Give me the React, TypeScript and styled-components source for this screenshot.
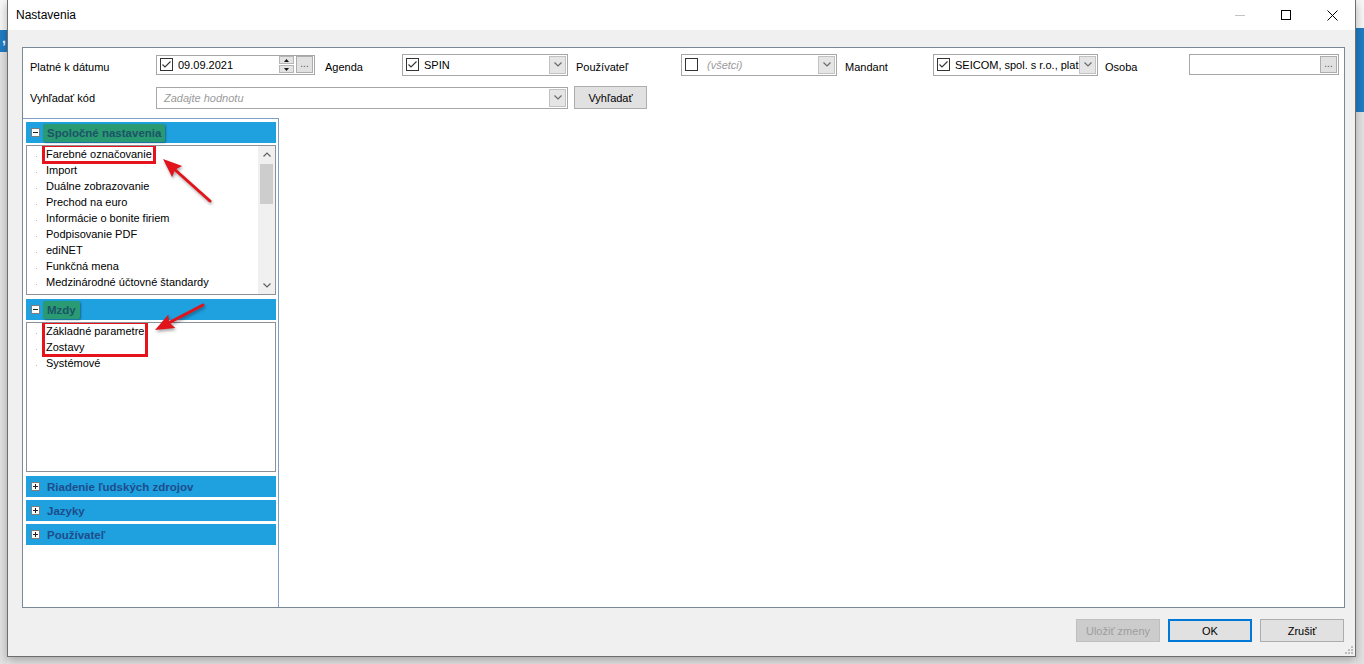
import styled, { createGlobalStyle } from "styled-components";

const GlobalStyle = createGlobalStyle`
  html, body {
    margin: 0;
    padding: 0;
  }
  body {
    font-family: "Liberation Sans", Arial, sans-serif;
    font-size: 11px;
    color: #000;
    background: #e8e8e8;
    overflow: hidden;
  }
`;

const Desktop = styled.div`
  display: flex;
  width: 1364px;
  height: 664px;
`;

const Strip = styled.div<{ $w: number; $from: number; $to: number }>`
  width: ${(p) => p.$w}px;
  flex-shrink: 0;
  overflow: hidden;
  background: linear-gradient(
    to bottom,
    #f6f6f6 0,
    #f6f6f6 ${(p) => p.$from}px,
    #1f7cc4 ${(p) => p.$from}px,
    #1f7cc4 ${(p) => p.$to}px,
    #e2e2e2 ${(p) => p.$to}px
  );
`;

const StripText = styled.div`
  padding: 30px 0 0 2px;
  color: #fff;
  font-size: 14px;
  font-weight: bold;
`;

const Window = styled.div`
  position: relative;
  width: 1349px;
  height: 657px;
  flex-shrink: 0;
  box-sizing: border-box;
  border: 1px solid #6e6e6e;
  border-top: 0;
  background: #f0f0f0;
  display: flex;
  flex-direction: column;
  box-shadow: 0 4px 9px rgba(0, 0, 0, 0.28);
`;

const TitleBar = styled.div`
  height: 30px;
  flex-shrink: 0;
  background: #fff;
  display: flex;
  align-items: center;
  padding-left: 8px;
`;

const Title = styled.span`
  margin-right: auto;
  font-size: 12px;
`;

const CaptionButton = styled.div`
  width: 46px;
  height: 30px;
  display: flex;
  align-items: center;
  justify-content: center;
`;

const Body = styled.div`
  flex: 1;
  padding: 17px 10px 0 14px;
  display: flex;
  flex-direction: column;
`;

const Panel = styled.div`
  height: 561px;
  box-sizing: border-box;
  border: 1px solid #7a8797;
  background: #fff;
  display: flex;
  flex-direction: column;
`;

const Form = styled.div`
  padding: 5px 0 0 7px;
  display: flex;
  flex-direction: column;
  gap: 10px;
`;

const Row = styled.div<{ $labelDrop?: number }>`
  display: flex;
  align-items: center;
  height: 23px;
`;

const Label = styled.span<{ $w: number; $ml?: number; $drop?: number }>`
  width: ${(p) => p.$w}px;
  margin-left: ${(p) => p.$ml ?? 0}px;
  padding-top: ${(p) => (p.$drop ?? 0) * 2}px;
  flex-shrink: 0;
  white-space: nowrap;
`;

const Field = styled.div<{ $w: number; $h?: number }>`
  width: ${(p) => p.$w}px;
  height: ${(p) => p.$h ?? 22}px;
  box-sizing: border-box;
  flex-shrink: 0;
  border: 1px solid #a7a7a7;
  background: #fff;
  display: flex;
  align-items: center;
  padding-left: 3px;
`;

const FieldText = styled.span<{ $placeholder?: boolean }>`
  flex: 1;
  min-width: 0;
  overflow: hidden;
  white-space: nowrap;
  color: ${(p) => (p.$placeholder ? "#9a9a9a" : "#000")};
  font-style: ${(p) => (p.$placeholder ? "italic" : "normal")};
  padding-left: ${(p) => (p.$placeholder ? "4px" : "0")};
`;

const CheckBox = styled.span`
  width: 13px;
  height: 13px;
  box-sizing: border-box;
  border: 1px solid #333;
  background: #fff;
  margin-right: 5px;
  flex-shrink: 0;
  display: flex;
  align-items: center;
  justify-content: center;
`;

const DropButton = styled.span`
  width: 17px;
  height: 18px;
  box-sizing: border-box;
  margin: 0 1px 0 0;
  flex-shrink: 0;
  background: #e5e5e5;
  border: 1px solid #c2c2c2;
  display: flex;
  align-items: center;
  justify-content: center;
`;

const Spinner = styled.span`
  width: 15px;
  height: 17px;
  flex-shrink: 0;
  display: flex;
  flex-direction: column;
  gap: 1px;
`;

const SpinHalf = styled.span`
  flex: 1;
  background: #e3e3e3;
  border: 1px solid #b5b5b5;
  display: flex;
  align-items: center;
  justify-content: center;
`;

const DotsButton = styled.span`
  width: 17px;
  height: 17px;
  box-sizing: border-box;
  margin: 0 1px 0 2px;
  flex-shrink: 0;
  background: #e1e1e1;
  border: 1px solid #adadad;
  color: #555;
  font-size: 10px;
  line-height: 13px;
  text-align: center;
`;

const PushButton = styled.button<{ $w: number; $variant?: "primary" | "disabled" }>`
  width: ${(p) => p.$w}px;
  height: 23px;
  box-sizing: border-box;
  flex-shrink: 0;
  padding: 0;
  font-family: inherit;
  font-size: 11px;
  background: ${(p) => (p.$variant === "disabled" ? "#cccccc" : "#e1e1e1")};
  color: ${(p) => (p.$variant === "disabled" ? "#9d9d9d" : "#000")};
  border: ${(p) =>
    p.$variant === "primary"
      ? "2px solid #0078d7"
      : p.$variant === "disabled"
      ? "1px solid #bfbfbf"
      : "1px solid #adadad"};
`;

const Split = styled.div`
  flex: 1;
  margin-top: 9px;
  display: flex;
`;

const Nav = styled.div`
  position: relative;
  width: 256px;
  box-sizing: border-box;
  border-top: 1px solid #7fa0c6;
  border-right: 1px solid #7fa0c6;
  padding: 3px 2px 0 3px;
  display: flex;
  flex-direction: column;
`;

const List = styled.div<{ $h: number }>`
  height: ${(p) => p.$h}px;
  margin-top: 2px;
  box-sizing: border-box;
  border: 1px solid #8b9099;
  background: #fff;
  display: flex;
  overflow: hidden;
`;

const GroupHeader = styled.div`
  height: 21px;
  flex-shrink: 0;
  background: #1fa0df;
  display: flex;
  align-items: center;
  padding-left: 5px;
  font-size: 11.5px;
  font-weight: bold;
  color: #1d4d8b;
  white-space: nowrap;

  & + & {
    margin-top: 3px;
  }
  ${List} + & {
    margin-top: 4px;
  }
`;

const ToggleBox = styled.span<{ $open: boolean }>`
  position: relative;
  width: 9px;
  height: 9px;
  box-sizing: border-box;
  border: 1px solid #7d7d7d;
  background: #fbfbfb;
  margin-right: ${(p) => (p.$open ? 3 : 7)}px;
  flex-shrink: 0;

  &::before {
    content: "";
    position: absolute;
    left: 1px;
    top: 3px;
    width: 5px;
    height: 1px;
    background: #222;
  }
  &::after {
    content: "";
    display: ${(p) => (p.$open ? "none" : "block")};
    position: absolute;
    left: 3px;
    top: 1px;
    width: 1px;
    height: 5px;
    background: #222;
  }
`;

const Highlight = styled.span`
  height: 18px;
  line-height: 18px;
  padding: 0 4px;
  background: #2a9a73;
  color: #1b5467;
  border-radius: 2px;
  box-shadow: 1px 1px 2px rgba(0, 0, 0, 0.35);
`;

const Items = styled.div`
  flex: 1;
`;

const ItemRow = styled.div`
  padding-left: 17px;
  height: 16px;
`;

const ItemText = styled.span<{ $marked?: boolean }>`
  position: relative;
  display: inline-block;
  height: 16px;
  line-height: 16px;
  padding: 0 2px;
  white-space: nowrap;
  outline: ${(p) => (p.$marked ? "3px solid #e5141c" : "none")};
  outline-offset: -1px;

  &::before {
    content: "";
    position: absolute;
    left: -8px;
    top: 10px;
    width: 1px;
    height: 1px;
    background: #b9b9b9;
  }
`;

const MarkedGroup = styled.div`
  margin-left: 17px;
  width: fit-content;
  outline: 3px solid #e5141c;
  outline-offset: -1px;

  ${ItemText} {
    display: block;
  }
`;

const ScrollBar = styled.div`
  width: 17px;
  flex-shrink: 0;
  background: #f0f0f0;
  display: flex;
  flex-direction: column;
  align-items: center;
`;

const ScrollArrow = styled.div`
  height: 17px;
  width: 17px;
  display: flex;
  align-items: center;
  justify-content: center;
`;

const Thumb = styled.div`
  width: 13px;
  height: 40px;
  margin-top: 1px;
  background: #cdcdcd;
`;

const Gap = styled.div`
  flex: 1;
`;

const Content = styled.div`
  flex: 1;
`;

const Overlay = styled.svg`
  position: absolute;
  left: 0;
  top: 0;
  pointer-events: none;
  overflow: visible;
  filter: drop-shadow(1px 2px 1.5px rgba(0, 0, 0, 0.35));
`;

const Footer = styled.div`
  display: flex;
  justify-content: flex-end;
  gap: 8px;
  margin-top: 11px;
  padding-right: 1px;
`;

const Grip = styled.svg`
  position: absolute;
  right: 2px;
  bottom: 2px;
`;

function Check() {
  return (
    <svg width="11" height="11" viewBox="0 0 11 11">
      <polyline points="1.5,5.5 4,8 9.5,2.5" fill="none" stroke="#333" strokeWidth="1.1" />
    </svg>
  );
}

function Chevron({ up = false, color = "#6a6a6a" }: { up?: boolean; color?: string }) {
  return (
    <svg width="8" height="5" viewBox="0 0 8 5">
      <polyline
        points={up ? "0.5,4.5 4,1 7.5,4.5" : "0.5,0.5 4,4 7.5,0.5"}
        fill="none"
        stroke={color}
        strokeWidth="1.2"
      />
    </svg>
  );
}

function Tri({ up }: { up?: boolean }) {
  return (
    <svg width="5" height="3" viewBox="0 0 5 3">
      <polygon points={up ? "0,3 2.5,0 5,3" : "0,0 2.5,3 5,0"} fill="#111" />
    </svg>
  );
}

function Arrow({ x1, y1, x2, y2 }: { x1: number; y1: number; x2: number; y2: number }) {
  // tail (x1,y1) -> tip (x2,y2)
  const dx = x2 - x1;
  const dy = y2 - y1;
  const len = Math.hypot(dx, dy);
  const ux = dx / len;
  const uy = dy / len;
  const head = 19;
  const half = 7.5;
  const bx = x2 - ux * head;
  const by = y2 - uy * head;
  const px = -uy;
  const py = ux;
  const pts = [
    `${x2},${y2}`,
    `${bx + px * half},${by + py * half}`,
    `${bx + ux * 3},${by + uy * 3}`,
    `${bx - px * half},${by - py * half}`,
  ].join(" ");
  return (
    <g>
      <line x1={x1} y1={y1} x2={bx + ux * 4} y2={by + uy * 4} stroke="#e2141b" strokeWidth="3" strokeLinecap="round" />
      <polygon points={pts} fill="#e2141b" />
    </g>
  );
}

const commonItems = [
  "Import",
  "Duálne zobrazovanie",
  "Prechod na euro",
  "Informácie o bonite firiem",
  "Podpisovanie PDF",
  "ediNET",
  "Funkčná mena",
  "Medzinárodné účtovné štandardy",
  "Správa dokumentov",
];

function App() {
  return (
    <>
      <GlobalStyle />
      <Desktop>
        <Strip $w={7} $from={30} $to={52}>
          <StripText>,</StripText>
        </Strip>
        <Window>
          <TitleBar>
            <Title>Nastavenia</Title>
            <CaptionButton>
              <svg width="10" height="1" viewBox="0 0 10 1">
                <rect width="10" height="1" fill="#c4c4c4" />
              </svg>
            </CaptionButton>
            <CaptionButton>
              <svg width="10" height="10" viewBox="0 0 10 10">
                <rect x="0.5" y="0.5" width="9" height="9" fill="none" stroke="#000" strokeWidth="1" />
              </svg>
            </CaptionButton>
            <CaptionButton>
              <svg width="11" height="11" viewBox="0 0 11 11">
                <path d="M0.5 0.5 L10.5 10.5 M10.5 0.5 L0.5 10.5" stroke="#000" strokeWidth="1" />
              </svg>
            </CaptionButton>
          </TitleBar>

          <Body>
            <Panel>
              <Form>
                <Row>
                  <Label $w={126} $drop={2}>Platné k dátumu</Label>
                  <Field $w={159} $h={20}>
                    <CheckBox>
                      <Check />
                    </CheckBox>
                    <FieldText>09.09.2021</FieldText>
                    <Spinner>
                      <SpinHalf>
                        <Tri up />
                      </SpinHalf>
                      <SpinHalf>
                        <Tri />
                      </SpinHalf>
                    </Spinner>
                    <DotsButton>...</DotsButton>
                  </Field>
                  <Label $w={77} $ml={10} $drop={2}>Agenda</Label>
                  <Field $w={166}>
                    <CheckBox>
                      <Check />
                    </CheckBox>
                    <FieldText>SPIN</FieldText>
                    <DropButton>
                      <Chevron />
                    </DropButton>
                  </Field>
                  <Label $w={105} $ml={8} $drop={2}>Používateľ</Label>
                  <Field $w={156}>
                    <CheckBox />
                    <FieldText $placeholder>(všetci)</FieldText>
                    <DropButton>
                      <Chevron />
                    </DropButton>
                  </Field>
                  <Label $w={88} $ml={8} $drop={2}>Mandant</Label>
                  <Field $w={165}>
                    <CheckBox>
                      <Check />
                    </CheckBox>
                    <FieldText>SEICOM, spol. s r.o., plat</FieldText>
                    <DropButton>
                      <Chevron />
                    </DropButton>
                  </Field>
                  <Label $w={84} $ml={7} $drop={2}>Osoba</Label>
                  <Field $w={150} $h={21}>
                    <FieldText />
                    <DotsButton>...</DotsButton>
                  </Field>
                </Row>
                <Row>
                  <Label $w={126}>Vyhľadať kód</Label>
                  <Field $w={412}>
                    <FieldText $placeholder>Zadajte hodnotu</FieldText>
                    <DropButton>
                      <Chevron />
                    </DropButton>
                  </Field>
                  <Label $w={6} />
                  <PushButton $w={73}>Vyhľadať</PushButton>
                </Row>
              </Form>

              <Split>
                <Nav>
                  <GroupHeader>
                    <ToggleBox $open />
                    <Highlight>Spoločné nastavenia</Highlight>
                  </GroupHeader>
                  <List $h={150}>
                    <Items>
                      <ItemRow>
                        <ItemText $marked>Farebné označovanie</ItemText>
                      </ItemRow>
                      {commonItems.map((t) => (
                        <ItemRow key={t}>
                          <ItemText>{t}</ItemText>
                        </ItemRow>
                      ))}
                    </Items>
                    <ScrollBar>
                      <ScrollArrow>
                        <Chevron up color="#606060" />
                      </ScrollArrow>
                      <Thumb />
                      <Gap />
                      <ScrollArrow>
                        <Chevron color="#606060" />
                      </ScrollArrow>
                    </ScrollBar>
                  </List>

                  <GroupHeader>
                    <ToggleBox $open />
                    <Highlight>Mzdy</Highlight>
                  </GroupHeader>
                  <List $h={150}>
                    <Items>
                      <MarkedGroup>
                        <ItemText>Základné parametre</ItemText>
                        <ItemText>Zostavy</ItemText>
                      </MarkedGroup>
                      <ItemRow>
                        <ItemText>Systémové</ItemText>
                      </ItemRow>
                    </Items>
                  </List>

                  <GroupHeader>
                    <ToggleBox $open={false} />
                    Riadenie ľudských zdrojov
                  </GroupHeader>
                  <GroupHeader>
                    <ToggleBox $open={false} />
                    Jazyky
                  </GroupHeader>
                  <GroupHeader>
                    <ToggleBox $open={false} />
                    Používateľ
                  </GroupHeader>

                  <Overlay width="256" height="240">
                    <Arrow x1={187} y1={82} x2={140} y2={40} />
                    <Arrow x1={180} y1={186} x2={132} y2={211} />
                  </Overlay>
                </Nav>
                <Content />
              </Split>
            </Panel>

            <Footer>
              <PushButton $w={84} $variant="disabled">
                Uložiť zmeny
              </PushButton>
              <PushButton $w={84} $variant="primary">
                OK
              </PushButton>
              <PushButton $w={84}>Zrušiť</PushButton>
            </Footer>
          </Body>

          <Grip width="8" height="8" viewBox="0 0 8 8">
            <rect x="6" y="0" width="2" height="2" fill="#bdbdbd" />
            <rect x="3" y="3" width="2" height="2" fill="#bdbdbd" />
            <rect x="6" y="3" width="2" height="2" fill="#bdbdbd" />
            <rect x="0" y="6" width="2" height="2" fill="#bdbdbd" />
            <rect x="3" y="6" width="2" height="2" fill="#bdbdbd" />
            <rect x="6" y="6" width="2" height="2" fill="#bdbdbd" />
          </Grip>
        </Window>
        <Strip $w={8} $from={28} $to={112} />
      </Desktop>
    </>
  );
}

export default App;
